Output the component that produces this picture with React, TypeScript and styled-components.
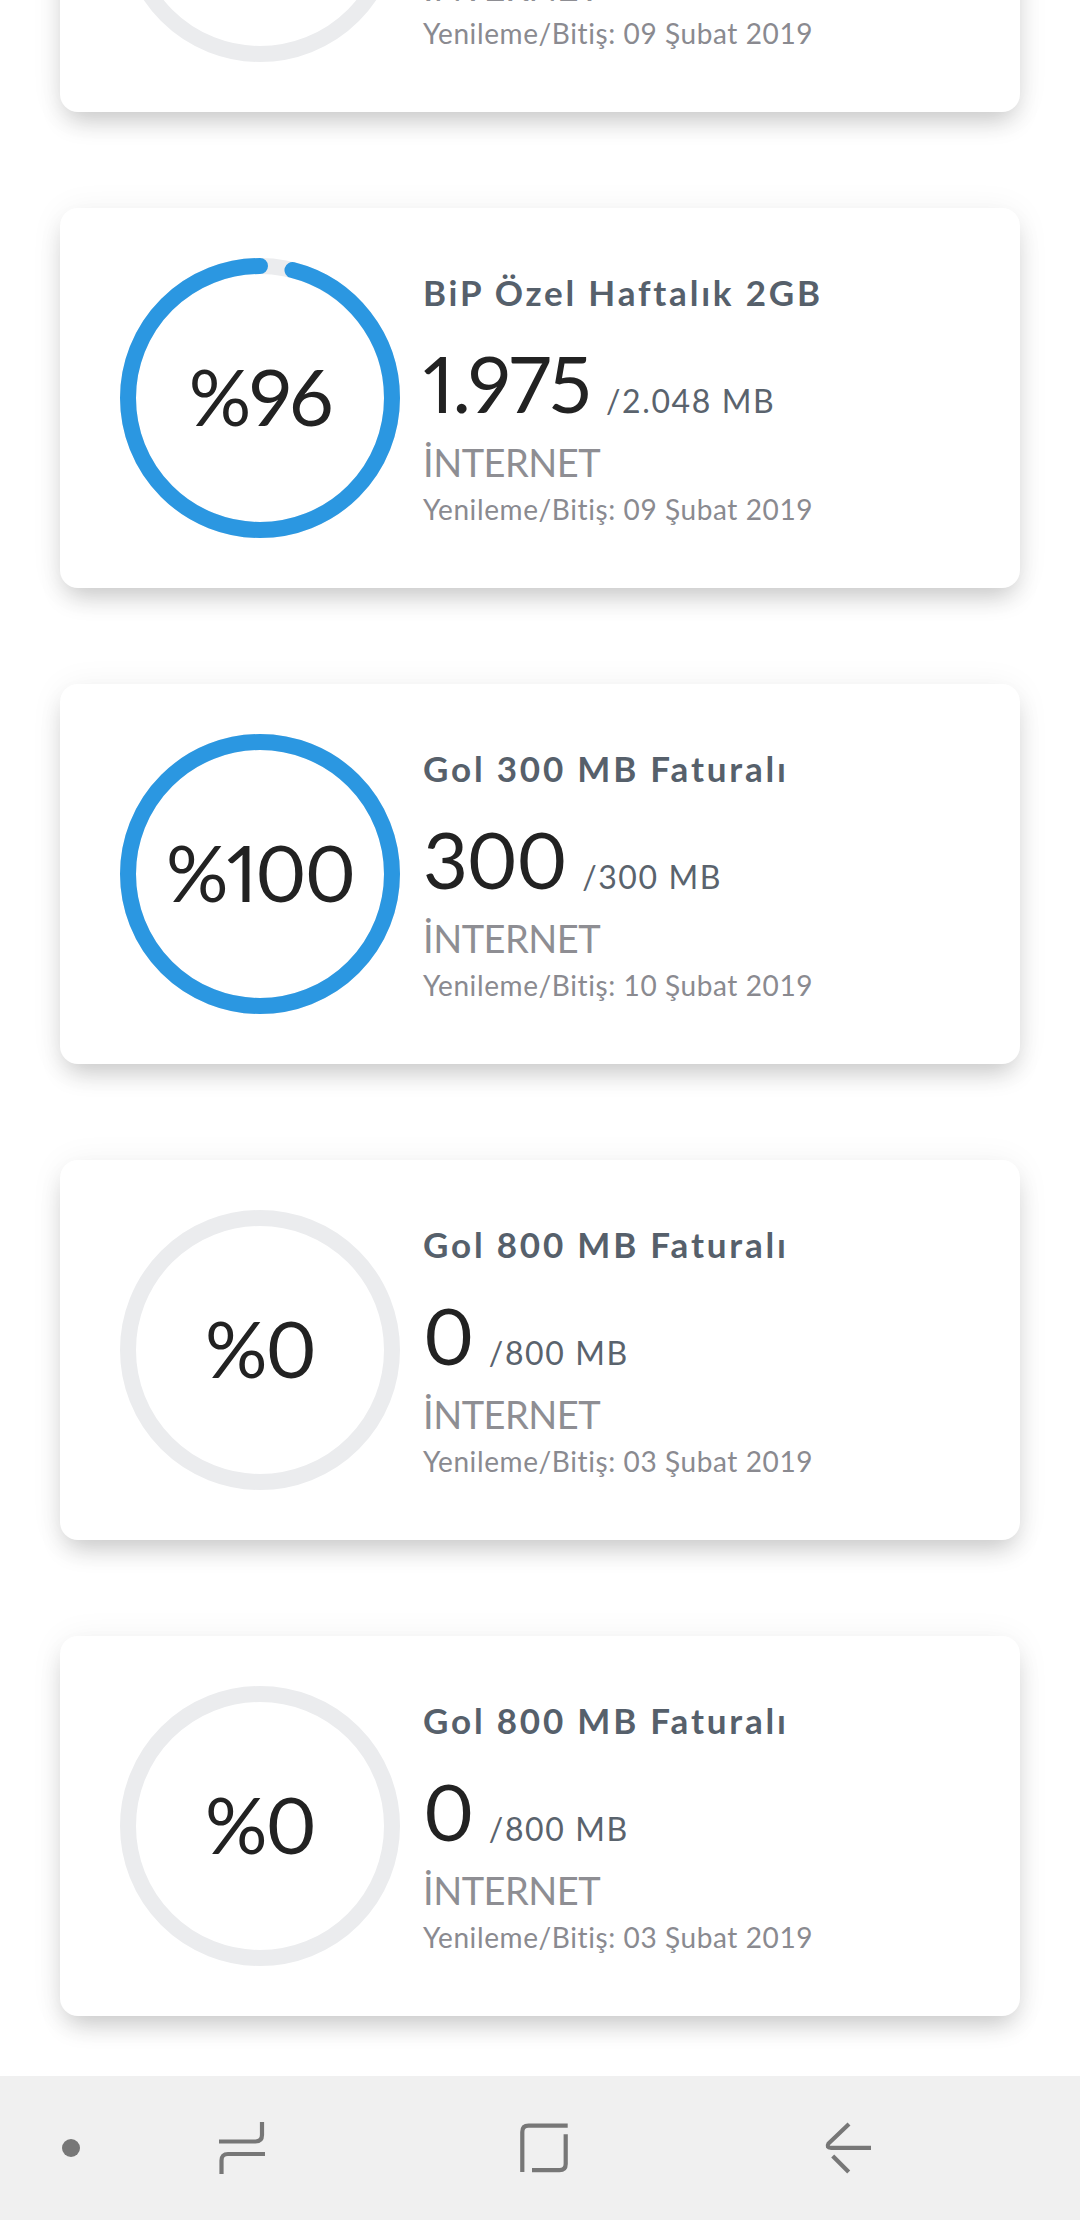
import React from "react";
import styled, { createGlobalStyle } from "styled-components";

const GlobalStyle = createGlobalStyle`
  html, body {
    margin: 0;
    padding: 0;
    background: #ffffff;
  }
  body {
    font-family: "Lato", "Noto Sans", sans-serif;
    -webkit-font-smoothing: antialiased;
  }
`;

const Screen = styled.div`
  width: 1080px;
  height: 2220px;
  display: flex;
  flex-direction: column;
  overflow: hidden;
  background: #ffffff;
`;

const Viewport = styled.div`
  flex: 1;
  overflow: hidden;
`;

const List = styled.div`
  display: flex;
  flex-direction: column;
  gap: 96px;
  padding: 0 60px;
  margin-top: -268px;
`;

const Card = styled.div`
  height: 380px;
  background: #ffffff;
  border-radius: 18px;
  box-shadow: 0 14px 26px -6px rgba(0, 0, 0, 0.2), 0 2px 34px rgba(0, 0, 0, 0.06);
  display: flex;
  align-items: center;
  padding-left: 60px;
  gap: 23px;
  box-sizing: border-box;
`;

const Gauge = styled.div`
  position: relative;
  width: 280px;
  height: 280px;
  flex-shrink: 0;
  display: flex;
  align-items: center;
  justify-content: center;
`;

const GaugeSvg = styled.svg`
  position: absolute;
  inset: 0;
`;

const Percent = styled.span`
  position: relative;
  font-family: "Lato", sans-serif;
  font-size: 78px;
  letter-spacing: -2px;
  font-variant-numeric: proportional-nums;
  color: #222222;
  font-weight: 400;
  margin-top: -4px;
`;

const Info = styled.div`
  align-self: stretch;
  display: flex;
  flex-direction: column;
  padding-top: 64px;
`;

const Title = styled.div`
  font-size: 35px;
  line-height: 40px;
  font-weight: 700;
  color: #56606b;
  letter-spacing: 2.8px;
`;

const AmountRow = styled.div`
  display: flex;
  align-items: baseline;
  gap: 16px;
  margin-top: 24px;
  line-height: 94px;
  height: 94px;
`;

const Amount = styled.span`
  font-size: 78px;
  letter-spacing: -1.5px;
  font-variant-numeric: proportional-nums;
  color: #222222;
  font-weight: 400;
`;

const Total = styled.span`
  font-size: 32px;
  color: #5a636d;
  letter-spacing: 1.6px;
`;

const Kind = styled.div`
  font-size: 38px;
  line-height: 46px;
  margin-top: 9px;
  color: #8e8e93;
  letter-spacing: -0.5px;
`;

const Renewal = styled.div`
  font-size: 28px;
  line-height: 34px;
  margin-top: 7px;
  color: #8a8a90;
  letter-spacing: 0.6px;
`;

const NavBar = styled.div`
  height: 144px;
  flex-shrink: 0;
  background: #f0f0f0;
  display: flex;
  align-items: center;
  padding-left: 62px;
`;

const NavDot = styled.div`
  width: 18px;
  height: 18px;
  border-radius: 50%;
  background: #777777;
`;

const NavButtons = styled.div`
  margin-left: 10px;
  display: grid;
  grid-template-columns: repeat(3, 303px);
  height: 100%;
`;

const NavButton = styled.div`
  display: flex;
  align-items: center;
  justify-content: center;
`;

type Item = {
  title: string;
  amount: string;
  total: string;
  percent: number;
  date: string;
};

const items: Item[] = [
  { title: "Gol 800 MB Faturalı", amount: "0", total: "/800 MB", percent: 0, date: "09 Şubat 2019" },
  { title: "BiP Özel Haftalık 2GB", amount: "1.975", total: "/2.048 MB", percent: 96, date: "09 Şubat 2019" },
  { title: "Gol 300 MB Faturalı", amount: "300", total: "/300 MB", percent: 100, date: "10 Şubat 2019" },
  { title: "Gol 800 MB Faturalı", amount: "0", total: "/800 MB", percent: 0, date: "03 Şubat 2019" },
  { title: "Gol 800 MB Faturalı", amount: "0", total: "/800 MB", percent: 0, date: "03 Şubat 2019" },
];

const R = 132;
const C = 2 * Math.PI * R;

function Ring({ percent }: { percent: number }) {
  return (
    <GaugeSvg width={280} height={280} viewBox="0 0 280 280">
      <circle cx={140} cy={140} r={R} fill="none" stroke="#ebecee" strokeWidth={16} />
      {percent >= 100 ? (
        <circle cx={140} cy={140} r={R} fill="none" stroke="#2b97e1" strokeWidth={16} />
      ) : percent > 0 ? (
        <circle
          cx={0}
          cy={0}
          r={R}
          fill="none"
          stroke="#2b97e1"
          strokeWidth={16}
          strokeLinecap="round"
          strokeDasharray={`${(C * percent) / 100} ${C}`}
          transform="translate(140 140) scale(-1 1) rotate(-90)"
        />
      ) : null}
    </GaugeSvg>
  );
}

function UsageCard({ item }: { item: Item }) {
  return (
    <Card>
      <Gauge>
        <Ring percent={item.percent} />
        <Percent>%{item.percent}</Percent>
      </Gauge>
      <Info>
        <Title>{item.title}</Title>
        <AmountRow>
          <Amount>{item.amount}</Amount>
          <Total>{item.total}</Total>
        </AmountRow>
        <Kind>İNTERNET</Kind>
        <Renewal>Yenileme/Bitiş: {item.date}</Renewal>
      </Info>
    </Card>
  );
}

const IconSvg = styled.svg`
  display: block;
  fill: none;
  stroke: #777777;
  stroke-width: 4.2;
`;

function RecentsIcon() {
  return (
    <IconSvg width={50} height={56} viewBox="0 0 50 56">
      <path d="M45 2 V15 Q45 21.5 38.5 21.5 H2" />
      <path d="M48 34 H11 Q4.5 34 4.5 40.5 V54" />
    </IconSvg>
  );
}

function HomeIcon() {
  return (
    <IconSvg width={54} height={56} viewBox="0 0 54 56">
      <path d="M4.3 52 V12 Q4.3 5.7 10.6 5.7 H49.7" />
      <path d="M47.7 14.3 V44 Q47.7 50.2 41.4 50.2 H14" />
    </IconSvg>
  );
}

function BackIcon() {
  return (
    <IconSvg width={54} height={56} viewBox="0 0 54 56">
      <path d="M28 4 L7.5 23.5 Q5 27.8 10 27.8 H50" />
      <path d="M11.7 36 L27.7 52" />
    </IconSvg>
  );
}

export default function App() {
  return (
    <>
      <GlobalStyle />
      <Screen>
        <Viewport>
          <List>
            {items.map((it, i) => (
              <UsageCard key={i} item={it} />
            ))}
          </List>
        </Viewport>
        <NavBar>
          <NavDot />
          <NavButtons>
            <NavButton>
              <RecentsIcon />
            </NavButton>
            <NavButton>
              <HomeIcon />
            </NavButton>
            <NavButton>
              <BackIcon />
            </NavButton>
          </NavButtons>
        </NavBar>
      </Screen>
    </>
  );
}
